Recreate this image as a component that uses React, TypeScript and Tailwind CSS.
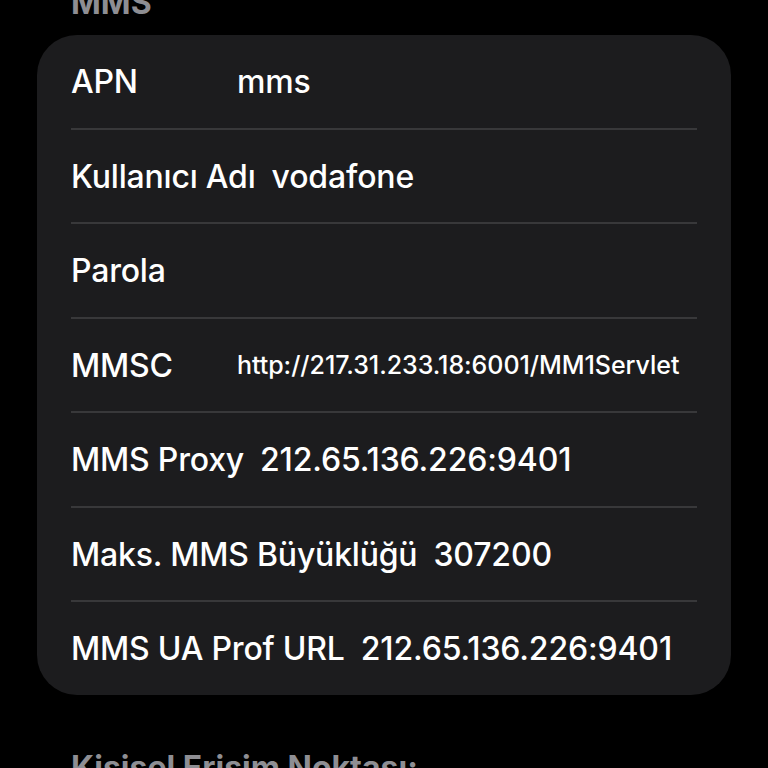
import React from "react";

interface Row {
  label: string;
  value: string;
  small?: boolean;
}

const rows: Row[] = [
  { label: "APN", value: "mms" },
  { label: "Kullanıcı Adı", value: "vodafone" },
  { label: "Parola", value: "" },
  { label: "MMSC", value: "http://217.31.233.18:6001/MM1Servlet", small: true },
  { label: "MMS Proxy", value: "212.65.136.226:9401" },
  { label: "Maks. MMS Büyüklüğü", value: "307200" },
  { label: "MMS UA Prof URL", value: "212.65.136.226:9401" },
];

const App = () => {
  return (
    <div
      className="min-h-screen w-[768px] h-[768px] overflow-hidden bg-black text-white"
      style={{ fontFamily: '"Inter", "Liberation Sans", sans-serif' }}
    >
      <div className="mt-[-16px] px-[71px] text-[32px] leading-[38px] font-bold text-[#8e8e93]">
        MMS
      </div>

      <div className="mx-[37px] mt-[13px] rounded-[40px] bg-[#1c1c1e]">
        {rows.map((row, i) => (
          <div key={row.label}>
            {i > 0 && <div className="mx-[34px] h-[2px] bg-[#38383a]" />}
            <div className="flex h-[92.5px] items-center gap-[16px] px-[34px] pt-[2px]">
              <span className="min-w-[150px] whitespace-nowrap text-[32px] font-medium tracking-[-0.2px]">
                {row.label}
              </span>
              <span
                className={
                  row.small
                    ? "whitespace-nowrap text-[25px] font-medium tracking-[-0.05px]"
                    : "whitespace-nowrap text-[32px] font-medium tracking-[-0.15px]"
                }
              >
                {row.value}
              </span>
            </div>
          </div>
        ))}
      </div>

      <div className="mt-[54px] px-[71px] text-[32px] leading-[38px] font-bold text-[#8e8e93]">
        Kişisel Erişim Noktası:
      </div>
    </div>
  );
};

export default App;
